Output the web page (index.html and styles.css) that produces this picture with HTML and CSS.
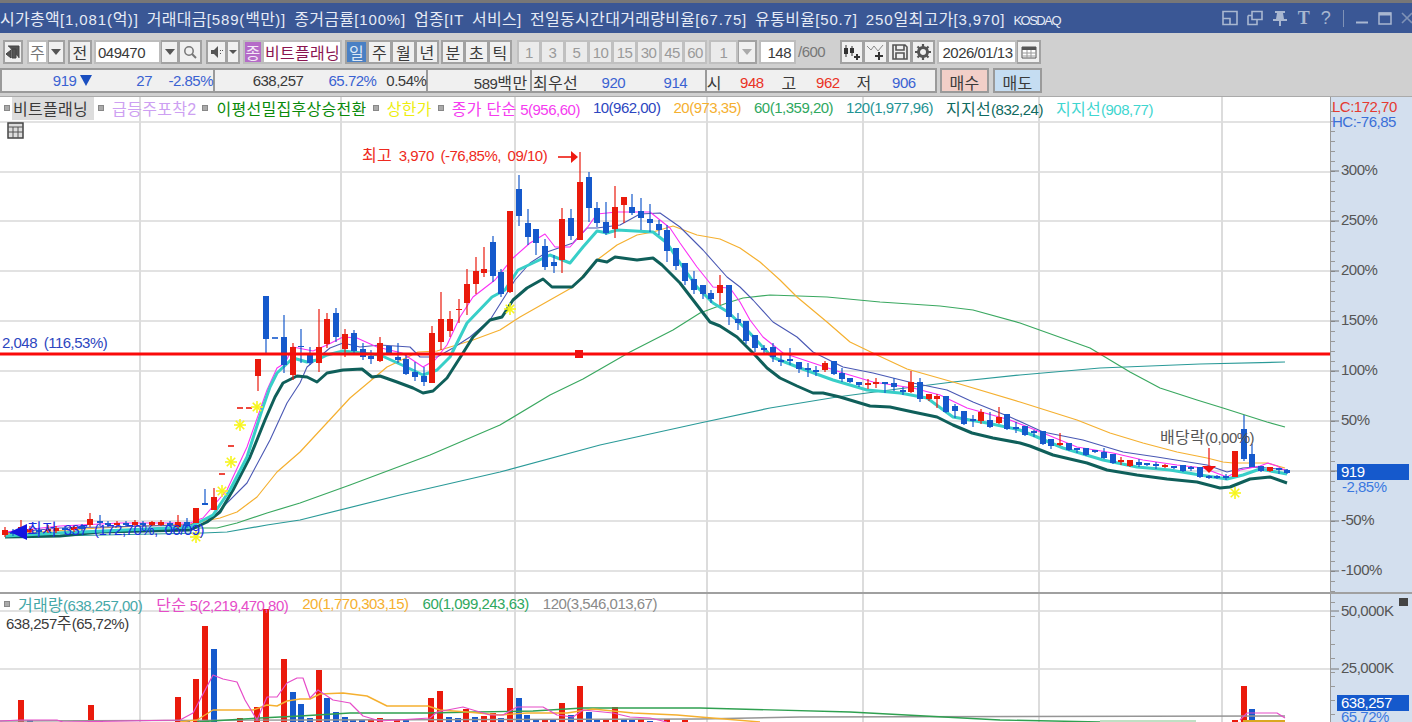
FILE: index.html
```html
<!DOCTYPE html>
<html lang="ko">
	<head>
		<meta charset="utf-8">
		<title>차트</title>
		<link rel="stylesheet" href="styles.css">
	</head>
	<body>
		<div id="titlebar">
			<span class="title-text"><span class="k">시가총액</span>[1,081(<span class="k">억</span>)] <span class="k">거래대금</span>[589(<span class="k">백만</span>)] <span class="k">종거금률</span>[100%] <span class="k">업종</span>[IT <span class="k">서비스</span>] <span class="k">전일동시간대거래량비율</span>[67.75] <span class="k">유통비율</span>[50.7] 250<span class="k">일최고가</span>[3,970] <span class="nar">KOSDAQ</span></span>
			<div class="win-icons">
				<svg class="ic16" viewBox="0 0 16 16"><path d="M1 1.5h14v13H1zM1 8.5h7v6" fill="none" stroke="#a9b7d0" stroke-width="1.6"/></svg>
				<svg class="ic16" viewBox="0 0 16 16"><path d="M5 1.5h10v8H5zM1 5.5h4M1 5.5v9h9v-5" fill="none" stroke="#a9b7d0" stroke-width="1.6"/></svg>
				<svg class="ic16" viewBox="0 0 16 16"><path d="M3 1h10v2h-2l1 6h3v2H9v5H7v-5H1V9h3l1-6H3z" fill="#a9b7d0"/></svg>
				<span class="ttl-t">T</span>
				<span class="ttl-q">?</span>
				<span class="ttl-sep"></span>
				<svg class="ic14" viewBox="0 0 14 14"><path d="M1 11.5h12" stroke="#a9b7d0" stroke-width="2"/></svg>
				<svg class="ic14" viewBox="0 0 14 14"><path d="M1 2h12v11H1z" fill="none" stroke="#a9b7d0" stroke-width="1.5"/><path d="M1 3h12" stroke="#a9b7d0" stroke-width="3"/></svg>
				<svg class="ic12" viewBox="0 0 12 14"><path d="M1 2l10 10M11 2L1 12" stroke="#7f92b6" stroke-width="1.6"/></svg>
			</div>
		</div>

		<div id="row1">
			<button class="btn w20"><svg class="ic16" viewBox="0 0 16 16"><path d="M3 2h11v12M7 5h4v9H7zM1 10l5-4v8z" fill="#555" stroke="#444" stroke-width="1"/></svg></button>
			<div class="pair ml4">
				<span class="field muted w21 k">주</span>
				<button class="btn w17"><i class="caret"></i></button>
			</div>
			<button class="btn w24 ml3 k">전</button>
			<div class="pair ml2">
				<span class="field code w67">049470</span>
				<button class="btn w18"><i class="caret"></i></button>
				<button class="btn w23"><svg class="ic14" viewBox="0 0 14 14"><circle cx="6" cy="6" r="4.2" fill="none" stroke="#777" stroke-width="1.5"/><path d="M9 9l4 4" stroke="#777" stroke-width="2"/></svg></button>
			</div>
			<div class="pair ml4">
				<button class="btn w21"><svg class="ic14" viewBox="0 0 14 14"><path d="M1 5h3l4-4v12L4 9H1z" fill="#555"/><path d="M10 5h1v1h-1zM12 5h1v1h-1zM10 8h1v1h-1z" fill="#555"/></svg></button>
				<button class="btn w13"><i class="caret small"></i></button>
			</div>
			<div class="pair ml3">
				<span class="field purple w20 k">종</span>
				<span class="field wine w79 k">비트플래닝</span>
			</div>
			<div class="pair ml3">
				<button class="btn on w23 k">일</button>
				<button class="btn w24 k">주</button>
				<button class="btn w24 k">월</button>
				<button class="btn w23 k">년</button>
			</div>
			<div class="pair ml2">
				<button class="btn w24 k">분</button>
				<button class="btn w24 k">초</button>
				<button class="btn w23 k">틱</button>
			</div>
			<div class="pair ml5">
				<button class="btn off w24">1</button>
				<button class="btn off w24">3</button>
				<button class="btn off w24">5</button>
				<button class="btn off w24">10</button>
				<button class="btn off w24">15</button>
				<button class="btn off w24">30</button>
				<button class="btn off w23">45</button>
				<button class="btn off w23">60</button>
			</div>
			<div class="pair ml2">
				<button class="btn off w29">1</button>
				<button class="btn w19"><i class="caret light"></i></button>
			</div>
			<span class="field num ml2 w37">148</span>
			<span class="count">/600</span>
			<div class="pair ml12">
				<button class="btn w24"><svg class="ic18" viewBox="0 0 18 18"><path d="M3 2v12M9 3v10" stroke="#333"/><path d="M1 5h4v6H1zM7 5h4v5H7z" fill="#333"/><path d="M11 14h6M14 11v6" stroke="#333" stroke-width="2"/></svg></button>
				<button class="btn w24"><svg class="ic18" viewBox="0 0 18 18"><path d="M0 3l4 4 3-4 4 5 5-6" fill="none" stroke="#888"/><path d="M8 13h8M12 9v8" stroke="#333" stroke-width="2"/></svg></button>
				<button class="btn w24"><svg class="ic18" viewBox="0 0 18 18"><path d="M2 2h12l2 2v12H2zM5 2v5h8V2M5 16v-6h8v6" fill="none" stroke="#555" stroke-width="1.6"/></svg></button>
				<button class="btn w23"><svg class="ic18" viewBox="0 0 18 18"><circle cx="9" cy="9" r="4.5" fill="none" stroke="#555" stroke-width="3"/><path d="M9 1v3M9 14v3M1 9h3M14 9h3M3.500 3.500l2 2M12.500 12.500l2 2M3.500 14.500l2-2M12.500 5.500l2-2" stroke="#555" stroke-width="2.200"/></svg></button>
			</div>
			<div class="pair ml2">
				<span class="field date w80">2026/01/13</span>
				<button class="btn w24"><svg class="ic16" viewBox="0 0 16 16"><path d="M1 3h14v11H1z" fill="#fff" stroke="#555"/><path d="M1 3h14v3H1z" fill="#555"/><path d="M1 9h14M1 12h14M6 6v8M10 6v8" stroke="#999"/></svg></button>
			</div>
		</div>

		<div id="row2">
			<div class="quotes">
				<div class="panel p1">
					<span class="blue">919 <i class="down"></i></span><span class="blue">27</span><span class="blue">-2.85%</span>
				</div>
				<div class="panel p2">
					<span>638,257</span><span class="blue">65.72%</span><span>0.54%</span>
				</div>
				<div class="panel p3"><span>589<span class="k">백만</span></span></div>
				<div class="panel p4">
					<span class="k">최우선</span><span class="blue">920</span><span class="blue">914</span>
				</div>
				<div class="panel p5">
					<span class="k">시</span><span class="red">948</span><span class="k">고</span><span class="red">962</span><span class="k">저</span><span class="blue">906</span>
				</div>
			</div>
			<button class="trade buy k">매수</button>
			<button class="trade sell k">매도</button>
		</div>

		<div id="chart">
			<div class="pane price">
				<div class="plot">
					<svg id="priceSvg" class="fill" viewBox="0 97 1330 495"></svg>
					<div class="legend">
						<i class="sq"></i><span class="lg-box k">비트플래닝</span>
						<i class="sq"></i><span class="k c-lilac">급등주포착2</span>
						<i class="sq"></i><span class="k c-green">이평선밀집후상승전환</span>
						<i class="sq"></i><span class="k c-yellow">상한가</span>
						<i class="sq"></i><span class="c-pink"><span class="k">종가 단순</span> 5(956,60)</span>
						<span class="c-navy">10(962,00)</span>
						<span class="c-orange">20(973,35)</span>
						<span class="c-ma60">60(1,359,20)</span>
						<span class="c-teal">120(1,977,96)</span>
						<span class="c-dark"><span class="k">지지선</span>(832,24)</span>
						<span class="c-cyan"><span class="k">지지선</span>(908,77)</span>
					</div>
					<svg class="grid-ic" viewBox="0 0 17 17"><path d="M1 1h15v15H1z" fill="#ddd" stroke="#444" stroke-width="1.500"/><path d="M1 5h15M6 5v11M11 5v11M1 10h15" stroke="#555"/></svg>
				</div>
				<div class="axis">
					<svg id="priceAxis" class="fill" viewBox="1331 97 81 495"></svg>
				</div>
			</div>
			<div class="pane volume">
				<div class="plot">
					<svg id="volSvg" class="fill" viewBox="0 594 1330 128"></svg>
					<div class="legend vol-legend">
						<i class="sq"></i><span class="c-vol"><span class="k">거래량</span>(638,257,00)</span>
						<span class="c-volpink"><span class="k">단순</span> 5(2,219,470,80)</span>
						<span class="c-orange">20(1,770,303,15)</span>
						<span class="c-ma60">60(1,099,243,63)</span>
						<span class="c-gray">120(3,546,013,67)</span>
					</div>
					<div class="vol-note">638,257<span class="k">주</span>(65,72%)</div>
				</div>
				<div class="axis">
					<svg id="volAxis" class="fill" viewBox="1331 594 81 128"></svg>
				</div>
			</div>
		</div>

		<script src="chart.js"></script>
	</body>
</html>
```

FILE: styles.css
```css
* {
	box-sizing: border-box;
}
html, body {
	margin: 0;
	height: 722px;
	overflow: hidden;
}
body {
	background: #d0d0d0;
	font-family: "Liberation Sans", "Noto Sans CJK KR", sans-serif;
	font-size: 15px;
	letter-spacing: -0.5px;
	color: #3a3a3a;
}
i {
	display: block;
	font-style: normal;
}

/* title bar */
#titlebar {
	height: 33px;
	border-top: 3px solid #777;
	background: #3a5795;
	display: flex;
	align-items: center;
	justify-content: space-between;
	overflow: hidden;
}
.title-text {
	color: #e6ebf5;
	white-space: nowrap;
	letter-spacing: 0.85px;
	word-spacing: 3px;
}
.nar {
	font-size: 13px;
	letter-spacing: -1.500px;
}
.win-icons {
	display: flex;
	align-items: center;
	gap: 9px;
	margin-right: -1px;
}
.ic12 { width: 12px; height: 14px; }
.ic14 { width: 14px; height: 14px; display: block; }
.ic16 { width: 16px; height: 16px; display: block; }
.ic18 { width: 18px; height: 18px; display: block; }
.ttl-t, .ttl-q {
	color: #a9b7d0;
	font-size: 18px;
	font-family: "Liberation Serif", serif;
	font-weight: bold;
	width: 13px;
	text-align: center;
}
.ttl-q {
	font-family: "Liberation Sans", sans-serif;
	font-weight: normal;
}
.ttl-sep {
	width: 1px;
	height: 17px;
	background: #7f92b6;
	margin: 0 2px;
}

/* toolbar */
#row1 {
	display: flex;
	height: 24px;
	margin: 7px 0 0 3px;
}
.pair {
	display: flex;
}
.btn, .field {
	height: 24px;
	padding: 0;
	border: 2px solid #a2a2a2;
	background: #f0f0f0;
	font-family: inherit;
	font-size: 15px;
	letter-spacing: inherit;
	color: #3a3a3a;
	display: flex;
	align-items: center;
	justify-content: center;
	white-space: nowrap;
}
.pair > * + * {
	border-left-width: 1px;
}
.field {
	background: #fff;
	border-color: #bdbdbd;
}
.btn.on {
	background: #4a80c4;
	color: #dfe9f6;
	border-color: #a2a2a2;
}
.btn.off {
	background: #ebebeb;
	color: #9a9a9a;
	border-color: #c0c0c0;
}
.muted { color: #777; }
.code { justify-content: flex-start; padding-left: 2px; }
.num { justify-content: flex-end; padding-right: 3px; }
.date { padding-left: 1px; }
.purple {
	background: #b56bc8;
	color: #f3e8f6;
}
.wine {
	color: #8a1550;
	justify-content: flex-start;
	padding-left: 1px;
}
.count {
	color: #777;
	width: 32px;
	padding-left: 2px;
	line-height: 24px;
}
.caret {
	width: 0;
	height: 0;
	border: 5px solid transparent;
	border-top: 6px solid #555;
	border-bottom: 0;
}
.caret.small { border-width: 4px 4px 0; border-top-color: #555; border-bottom: 0; }
.caret.light { border-top-color: #aaa; }

.w13 { width: 13px; }
.w17 { width: 17px; }
.w18 { width: 18px; }
.w19 { width: 19px; }
.w20 { width: 20px; }
.w21 { width: 21px; }
.w23 { width: 23px; }
.w24 { width: 24px; }
.w29 { width: 29px; }
.w37 { width: 37px; }
.w67 { width: 67px; }
.w79 { width: 79px; }
.w80 { width: 80px; }
.ml2 { margin-left: 2px; }
.ml3 { margin-left: 3px; }
.ml4 { margin-left: 4px; }
.ml5 { margin-left: 5px; }
.ml12 { margin-left: 12px; }

/* quote row */
#row2 {
	display: flex;
	height: 25px;
	margin-top: 4px;
}
.quotes {
	display: flex;
	width: 937px;
	border: 2px solid #9a9a9a;
	background: #f0f0f0;
}
.panel {
	display: grid;
	align-items: center;
	text-align: right;
	white-space: nowrap;
	border-right: 2px solid #9a9a9a;
}
.panel:last-child { border-right: 0; }
.p1 { width: 214px; grid-template-columns: 90px 60px 61px; }
.p2 { width: 213px; grid-template-columns: 88px 73px 50px; }
.p3 { width: 104px; grid-template-columns: 99px; }
.p4 { width: 175px; grid-template-columns: 46px 47px 62px; }
.p5 { width: 229px; grid-template-columns: 13px 44px 33px 43px 32px 44px; }
.blue { color: #3a62d2; }
.red { color: #ea3326; }
.down {
	display: inline-block;
	width: 0;
	height: 0;
	border: 6px solid transparent;
	border-top: 11px solid #1a4fc0;
	border-bottom: 0;
}
.trade {
	height: 25px;
	width: 49px;
	padding: 0;
	border: 2px solid #9a9a9a;
	font-family: inherit;
	color: #3a3a3a;
}
.buy {
	background: #f2cfc8;
	margin-left: 3px;
}
.sell {
	background: #c5ddf2;
	margin-left: 4px;
}

/* chart */
#chart {
	margin-top: 3px;
	height: 626px;
	border-top: 1px solid #aaa;
	background: #fff;
}
.pane {
	display: flex;
}
.price {
	height: 497px;
	border-bottom: 2px solid #a0a0a0;
}
.volume {
	height: 128px;
}
.plot {
	position: relative;
	width: 1330px;
	overflow: hidden;
}
.axis {
	position: relative;
	width: 82px;
	background: #d3dfee;
	border-left: 1px solid #999;
}
.fill {
	position: absolute;
	left: 0;
	top: 0;
	width: 100%;
	height: 100%;
	display: block;
}
.fill text {
	font-family: "Liberation Sans", "Noto Sans CJK KR", sans-serif;
	font-size: 15px;
	word-spacing: 3px;
}
.fill text tspan.k {
	font-size: 16px;
	letter-spacing: 0.3px;
}

/* legends lie over the plot */
.legend {
	position: absolute;
	left: 11px;
	top: 1px;
	display: flex;
	align-items: center;
	gap: 13px;
	white-space: nowrap;
	height: 19px;
}
.vol-legend {
	top: 0;
	gap: 14px;
}
.sq {
	width: 6px;
	height: 6px;
	background: #aaa;
	border: 1px solid #888;
	margin: 0 -5px 0 -7px;
}
.vol-legend .sq {
	margin: 0 -6px 0 -7px;
}
.lg-box {
	background: #ddd;
	padding: 0 6px 0 1px;
	margin: 0 -2px 0 -6px;
}
.c-lilac { color: #cda0f2; }
.c-green { color: #0a8a0a; }
.c-yellow { color: #eeee10; }
.c-pink { color: #f53cf0; }
.c-navy { color: #2c46c0; }
.c-orange { color: #f5b030; }
.c-ma60 { color: #2fa860; }
.c-teal { color: #1f9494; }
.c-dark { color: #0f6a60; }
.c-cyan { color: #3fd6d0; }
.c-vol { color: #45a8a8; }
.c-volpink { color: #e64cc8; }
.c-gray { color: #8a8a8a; }
.vol-note {
	position: absolute;
	left: 6px;
	top: 16px;
	white-space: nowrap;
}
.grid-ic {
	position: absolute;
	left: 7px;
	top: 25px;
	width: 17px;
	height: 17px;
}

/* hangul runs sit wider than the latin around them */
.k {
	font-size: 16px;
	letter-spacing: 0.3px;
}
```

FILE: chart.js
```js
// all coordinates below are page pixels, the viewBox of each svg maps them
var RED = "#ea1a0c", BLUE = "#1559cc";

// x, r/b, body top, body bottom, high, low
var candles = [
	[5,"r",530,535,527,537],[13,"b",532,534,529,536],[21,"r",527,532,520,534],[30,"r",529,532,526,534],[39,"b",530,532,528,534],
	[48,"r",529,531,525,533],[56,"r",528,531,526,533],[65,"b",528,530,526,532],[74,"r",527,530,525,532],[82,"b",526,529,524,531],
	[90,"r",519,525,513,527],[100,"b",521,523,515,526],[108,"b",523,525,521,527],[117,"r",523,525,521,526],[126,"b",523,525,521,526],
	[135,"r",522,525,520,526],[143,"b",523,525,521,526],[152,"r",522,525,521,526],[161,"r",522,525,520,526],[170,"b",523,525,521,527],
	[178,"r",522,527,515,529],[187,"b",522,526,518,528],[196,"r",508,523,508,523],[205,"b",503,505,489,505],[214,"r",497,510,488,510],
	[258,"r",359,376,359,391],[266,"b",296,339,296,353],
	[284,"b",337,365,315,373],[293,"r",347,375,343,380],[301,"b",346,347,329,363],[310,"b",355,363,347,365],[319,"r",347,363,309,372],
	[327,"r",319,344,313,348],[336,"b",313,337,308,342],[345,"r",334,349,329,357],[354,"b",333,351,330,353],[363,"b",349,357,343,360],
	[371,"b",356,359,350,364],[380,"r",343,361,337,362],[389,"b",346,353,346,354],[398,"b",357,360,343,363],[406,"b",359,374,355,375],
	[415,"b",372,377,362,381],[424,"b",376,382,367,386],[432,"r",333,383,326,383],[441,"r",319,342,292,350],[450,"r",319,331,311,337],
	[459,"r",309,310,299,323],[467,"r",284,303,269,315],[476,"r",271,284,257,294],[484,"r",269,273,247,277],[493,"b",242,276,236,282],
	[501,"b",272,294,269,297],[510,"r",211,292,211,293],[519,"b",189,216,175,226],[528,"b",223,237,209,245],[536,"b",229,243,229,255],
	[545,"b",246,267,239,270],[554,"b",262,266,255,273],[562,"r",219,260,208,273],[571,"b",218,236,209,240],[580,"r",182,240,152,240],
	[589,"b",177,208,172,222],[597,"b",208,223,202,227],[606,"b",222,233,202,235],[615,"r",207,229,186,238],[624,"r",197,205,197,223],
	[632,"b",207,213,194,215],[641,"b",211,218,198,230],[650,"b",219,223,204,232],[659,"b",224,230,220,235],[667,"b",230,251,225,262],
	[676,"b",248,266,248,270],[685,"b",263,281,263,285],[694,"b",279,290,271,294],[703,"b",285,294,285,299],[711,"b",293,299,290,303],
	[720,"r",285,293,275,305],[729,"b",285,317,285,325],[738,"b",319,323,313,330],[746,"b",321,341,321,344],[755,"b",335,348,335,352],
	[764,"b",348,350,345,353],[773,"b",347,357,343,362],[781,"b",360,362,355,366],[790,"b",359,361,348,365],[799,"b",362,369,362,373],
	[808,"b",368,370,363,377],[816,"b",370,372,366,376],[825,"r",363,370,361,372],[834,"b",361,374,361,375],[842,"b",373,379,368,382],
	[850,"b",378,382,378,383],[859,"b",382,385,382,387],[868,"r",383,385,379,389],[876,"r",382,384,378,388],[885,"b",382,384,382,393],
	[894,"b",383,387,378,391],[903,"b",390,392,387,395],[911,"r",382,392,371,393],[920,"b",382,399,378,402],[929,"r",394,399,394,401],
	[937,"r",396,399,394,408],[946,"b",396,412,396,413],[955,"b",406,411,404,418],[964,"b",411,424,411,425],[973,"b",419,421,415,427],
	[981,"r",412,421,409,424],[990,"b",420,427,412,428],[999,"r",417,423,407,424],[1007,"b",414,429,414,430],[1016,"b",427,429,422,433],
	[1025,"b",426,435,426,436],[1034,"b",431,433,430,437],[1043,"b",431,444,431,445],[1051,"b",439,446,439,449],[1060,"r",443,445,433,446],
	[1069,"b",443,450,443,451],[1077,"b",448,450,448,453],[1086,"b",448,455,448,456],[1095,"b",450,452,450,453],[1104,"b",452,458,448,459],
	[1113,"b",454,463,454,464],[1121,"r",460,462,457,465],[1130,"r",460,466,460,467],[1139,"b",462,465,459,467],[1147,"b",463,465,463,466],
	[1156,"b",464,466,462,469],[1165,"r",465,467,464,468],[1174,"b",466,468,466,469],[1183,"b",465,471,465,472],[1191,"b",467,469,466,471],
	[1200,"b",467,477,467,478],[1209,"b",476,478,475,479],[1217,"b",476,478,475,479],[1226,"b",476,478,474,480],[1235,"r",451,477,451,477],
	[1244,"b",429,459,415,461],[1252,"b",454,467,444,467],[1261,"b",466,471,466,472],[1270,"r",467,471,467,472],[1279,"b",468,470,468,474],
	[1287,"b",470,473,469,474]
];

var dark = "5,537 60,536 100,532 190,530 207,522 220,512 233,490 250,457 265,420 275,397 283,383 297,376 307,377 317,382 327,373 343,370 362,369 372,377 380,376 397,382 413,388 423,393 433,391 447,378 463,353 473,337 490,320 502,317 513,300 527,288 543,279 552,287 572,287 583,277 597,260 607,262 615,257 637,260 653,258 662,265 680,283 700,309 710,322 720,326 737,337 755,355 767,368 780,378 797,386 813,393 823,393 840,397 870,406 890,407 913,412 937,417 953,425 972,433 993,438 1020,443 1030,446 1053,455 1087,463 1107,470 1137,475 1167,479 1197,482 1220,488 1230,487 1250,479 1270,477 1287,483";
var cyan = "5,536 60,533 190,527 213,515 230,490 247,457 262,410 270,387 277,373 293,358 307,362 317,360 327,355 343,351 380,355 402,365 423,375 437,370 450,357 467,323 492,297 505,290 518,270 533,263 550,255 570,263 583,247 597,231 607,233 617,230 653,232 667,243 680,263 697,287 713,303 728,312 747,330 772,357 800,368 833,380 867,390 900,393 927,398 953,417 987,423 1020,430 1037,437 1063,448 1103,460 1137,467 1170,470 1200,475 1227,479 1243,475 1260,469 1287,474";
var pink = "5,532 60,526 120,523 190,523 203,518 227,490 247,447 267,390 277,368 285,363 293,347 313,351 327,345 343,337 357,338 377,347 402,353 423,367 435,360 447,345 460,317 473,297 495,280 513,258 530,243 545,234 555,247 570,247 587,228 597,214 617,212 650,212 670,228 680,243 697,267 713,287 730,288 740,302 750,320 763,337 783,353 813,363 843,373 873,382 913,388 940,395 967,408 1010,420 1043,433 1077,447 1113,453 1143,460 1177,465 1203,468 1227,477 1240,470 1260,466 1268,463 1277,466 1288,472";
var navy = "5,533 60,528 190,525 213,517 247,483 270,440 287,403 300,383 307,367 330,348 343,343 360,347 380,345 410,347 420,357 437,357 453,348 470,337 490,320 507,293 515,280 530,263 547,252 573,243 587,228 597,228 620,225 640,214 660,213 680,227 703,250 727,277 740,287 753,300 773,322 797,337 813,352 843,367 873,373 913,383 947,390 973,402 1010,417 1043,432 1083,440 1123,452 1157,457 1207,465 1227,472 1243,468 1257,467 1288,470";
var orange = "5,534 100,528 190,524 220,518 237,512 257,497 277,472 300,452 350,398 387,367 418,352 437,351 473,340 500,330 520,317 550,300 573,287 597,260 617,245 637,235 653,232 673,226 697,235 720,239 740,248 760,262 780,280 797,297 827,322 850,342 877,355 907,369 953,382 1020,402 1077,420 1110,433 1143,443 1177,452 1207,458 1223,462 1233,463 1267,463 1285,468";
var green = "5,534 190,528 217,528 237,523 267,513 300,503 350,485 430,455 500,425 550,395 583,379 630,352 673,330 700,313 727,303 743,298 770,295 827,297 880,302 940,306 973,310 1020,323 1090,348 1130,372 1160,388 1197,400 1223,408 1267,422 1285,427";
var teal = "5,537 203,533 227,532 267,525 300,520 400,495 500,472 600,445 700,423 770,408 837,397 867,393 913,387 953,382 1020,375 1100,368 1200,364 1285,362";

var stars = [[196,537],[222,491],[231,462],[240,425],[257,407],[510,309],[1235,493]];
var dashes = [[222,474,RED],[231,446,RED],[240,408,RED],[249,408,RED],[275,338,BLUE]];
var gridX = [140,341,515,707,863,1039,1222];

function line(x1, y1, x2, y2, col, w) {
	return '<line x1="'+x1+'" y1="'+y1+'" x2="'+x2+'" y2="'+y2+'" stroke="'+col+'" stroke-width="'+w+'"/>';
}
function poly(pts, col, w) {
	return '<polyline points="'+pts+'" fill="none" stroke="'+col+'" stroke-width="'+w+'" stroke-linejoin="round"/>';
}
function rect(x, y, w, h, col) {
	return '<rect x="'+x+'" y="'+y+'" width="'+w+'" height="'+h+'" fill="'+col+'"/>';
}
function text(x, y, col, s) {
	s = s.replace(/[\uAC00-\uD7A3]+/g, '<tspan class="k">$&</tspan>');
	return '<text x="'+x+'" y="'+y+'" fill="'+col+'">'+s+'</text>';
}
function tri(pts, col) {
	return '<polygon points="'+pts+'" fill="'+col+'"/>';
}
function star(x, y) {
	var s = "", i, a;
	for(i=0;i<4;i++) {
		a = i * Math.PI / 4;
		s += line(x-6*Math.cos(a), y-6*Math.sin(a), x+6*Math.cos(a), y+6*Math.sin(a), "#f7f51c", 1.6);
	}
	return s;
}
function grid(ys, top, bottom) {
	var s = "", i;
	for(i=0;i<ys.length;i++) s += line(0, ys[i], 1330, ys[i], "#e2e2e2", 2);
	for(i=0;i<gridX.length;i++) s += line(gridX[i], top, gridX[i], bottom, "#dcdcdc", 2);
	return s;
}

function drawPrice() {
	var s = grid([122,172,221,271,321,371,421,471,521,571], 97, 592), i, c;
	s += poly(teal, "#2a9a98", 1.2) + poly(green, "#3aa860", 1.2) + poly(orange, "#f5b030", 1.2);
	s += poly(navy, "#4a58b4", 1.1) + poly(pink, "#fb30f5", 1.1);
	s += poly(dark, "#0f5f5a", 3) + poly(cyan, "#38cfc8", 3);
	for(i=0;i<candles.length;i++) {
		c = candles[i];
		var col = c[1]=="r" ? RED : BLUE;
		s += line(c[0], c[4], c[0], c[5], col, 1.2);
		s += rect(c[0]-3, c[2], 6, c[3]-c[2], col);
	}
	for(i=0;i<dashes.length;i++) s += line(dashes[i][0]-3, dashes[i][1], dashes[i][0]+3, dashes[i][1], dashes[i][2], 1.6);
	for(i=0;i<stars.length;i++) s += star(stars[i][0], stars[i][1]);
	s += line(0, 354, 1330, 354, "#fa0a0a", 3) + rect(575, 350, 8, 8, "#f01010");
	s += text(362, 161, "#ee2a20", "최고 3,970 (-76,85%, 09/10)");
	s += line(558, 157, 572, 157, "#ee1a10", 1.6) + tri("571,151 578,157 571,163", "#ee1a10");
	s += text(2, 348, "#2c46c0", "2,048 (116,53%)");
	s += tri("10,532 27,524 27,540", "#1414e0");
	s += text(27, 535, "#1a30e0", "최저 337 (172,70%, 06/09)");
	s += text(1160, 443, "#555", "배당락(0,00%)");
	s += line(1209, 448, 1209, 466, "#f03030", 1.4) + tri("1202,466 1216,466 1209,473", "#f01010");
	document.getElementById("priceSvg").innerHTML = s;
}

// x, r/b, top
var volumes = [
	[21,"r",700],[30,"b",720],[91,"r",705],[100,"b",720],[178,"r",697],[187,"b",720],[196,"r",679],[205,"r",626],[214,"b",649],
	[240,"r",718],[257,"r",707],[266,"r",609],[284,"r",659],[293,"b",692],[301,"b",704],[310,"b",718],[319,"r",670],[327,"b",698],
	[336,"b",712],[345,"b",717],[353,"b",720],[362,"b",720],[371,"r",720],[380,"r",718],[397,"r",720],[406,"b",720],[431,"r",698],
	[440,"r",691],[449,"b",717],[458,"b",718],[466,"r",709],[475,"b",717],[484,"r",716],[493,"r",713],[501,"b",718],[510,"r",688],
	[519,"b",698],[527,"b",715],[536,"b",720],[545,"r",719],[553,"b",720],[562,"r",703],[571,"b",715],[580,"r",686],[589,"b",712],
	[597,"b",720],[606,"r",719],[615,"r",707],[624,"b",719],[632,"b",720],[641,"r",719],[650,"b",721],[667,"r",719],[685,"r",720],
	[1235,"r",720],[1244,"r",686],[1252,"b",709]
];
var vPink = "0,721 20,720 57,720 63,722 180,720 193,713 213,675 223,679 237,682 245,700 257,720 267,697 277,697 287,683 297,678 303,678 310,698 318,690 333,700 350,703 363,716 380,721 430,718 437,712 463,707 473,710 490,715 503,715 517,707 543,707 557,715 573,717 583,710 613,713 630,717 650,718 667,722";
var vPink2 = "1240,720 1247,713 1277,713 1285,718";
var vOrange = "180,722 197,720 213,710 253,710 267,705 277,706 287,701 300,699 310,699 320,694 343,693 367,696 387,706 428,706 440,710 467,712 500,715 527,713 567,713 593,709 633,713 677,715 700,717 760,722";
var vOrange2 = "1243,721 1285,721";
var vGreen = "197,722 260,718 300,716 350,713 427,713 477,712 533,711 583,708 700,708 850,712 1000,720 1100,722";
var vGray = "0,721 300,720 700,719 800,717 1285,716";

function drawVolume() {
	var s = grid([611,669], 594, 722), i, v;
	for(i=0;i<volumes.length;i++) {
		v = volumes[i];
		s += rect(v[0]-3, v[2], 6, 722-v[2], v[1]=="r" ? RED : BLUE);
	}
	s += line(1100, 721, 1196, 721, "#bfe0c4", 2);
	s += poly(vGray, "#959595", 1.4) + poly(vGreen, "#2fa050", 1.4);
	s += poly(vOrange, "#f5b030", 1.4) + poly(vOrange2, "#d9a820", 2);
	s += poly(vPink, "#e64cc8", 1.2) + poly(vPink2, "#e64cc8", 1.2);
	document.getElementById("volSvg").innerHTML = s;
}

function drawAxis() {
	var s = "", i, y;
	var labels = ["300%","250%","200%","150%","100%","50%","","-50%","-100%"];
	var ys = [171,221,271,321,371,421,471,521,571];
	for(y=111;y<592;y+=10) s += line(1331, y+0.5, 1335, y+0.5, "#999", 1);
	for(i=0;i<ys.length;i++) {
		s += line(1331, ys[i], 1339, ys[i], "#777", 1);
		s += text(1341, ys[i]+4, "#555", labels[i]);
	}
	s += text(1332, 112, "#e53a30", "LC:172,70");
	s += text(1332, 127, "#3a6fd8", "HC:-76,85");
	s += rect(1337, 464, 72, 16, "#1559cc");
	s += text(1341, 477, "#fff", "919");
	s += text(1342, 492, "#3a78e0", "-2,85%");
	document.getElementById("priceAxis").innerHTML = s;

	s = "";
	for(y=602;y<722;y+=14) s += line(1331, y+0.5, 1335, y+0.5, "#999", 1);
	s += line(1331, 611, 1339, 611, "#777", 1) + line(1331, 669, 1339, 669, "#777", 1);
	s += text(1341, 616, "#555", "50,000K");
	s += text(1341, 673, "#555", "25,000K");
	s += rect(1399, 598, 9, 8, "#444");
	s += rect(1337, 695, 72, 16, "#1559cc");
	s += text(1341, 708, "#fff", "638,257");
	s += text(1341, 722, "#3a78e0", "65,72%");
	document.getElementById("volAxis").innerHTML = s;
}

drawPrice();
drawVolume();
drawAxis();
```
